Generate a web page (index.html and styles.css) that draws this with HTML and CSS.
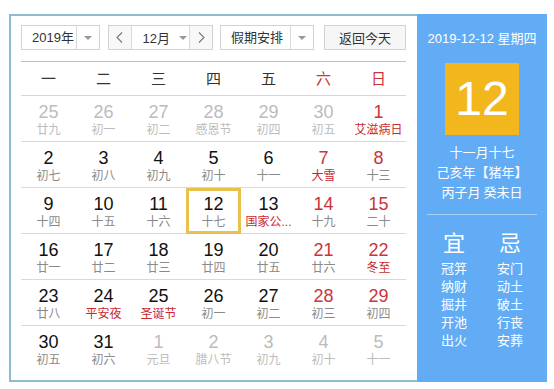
FILE: index.html
```html
<!DOCTYPE html>
<html lang="zh-CN">
<head>
    <meta charset="UTF-8">
    <meta name="viewport" content="width=device-width, initial-scale=1.0">
    <title>万年历</title>
    <link rel="stylesheet" href="styles.css">
</head>
<body>
    <div class="calendar">
        <div class="main">
            <div class="toolbar">
                <div class="select year">
                    <span class="label">2019年</span>
                    <span class="drop"><i class="caret"></i></span>
                </div>
                <div class="month-group">
                    <span class="nav">
                        <svg width="7" height="11" viewBox="0 0 7 11"><polyline points="6,0.5 1,5.5 6,10.5" fill="none" stroke="#777" stroke-width="1.1"/></svg>
                    </span>
                    <span class="month"><span class="label">12月</span><i class="caret"></i></span>
                    <span class="nav">
                        <svg width="7" height="11" viewBox="0 0 7 11"><polyline points="1,0.5 6,5.5 1,10.5" fill="none" stroke="#777" stroke-width="1.1"/></svg>
                    </span>
                </div>
                <div class="select holiday">
                    <span class="label">假期安排</span>
                    <span class="drop"><i class="caret"></i></span>
                </div>
                <button class="today-btn">返回今天</button>
            </div>

            <div class="weekdays">
                <span>一</span><span>二</span><span>三</span><span>四</span><span>五</span>
                <span class="red">六</span><span class="red">日</span>
            </div>

            <div class="days">
                <div class="day other"><b>25</b><em>廿九</em></div>
                <div class="day other"><b>26</b><em>初一</em></div>
                <div class="day other"><b>27</b><em>初二</em></div>
                <div class="day other"><b>28</b><em>感恩节</em></div>
                <div class="day other"><b>29</b><em>初四</em></div>
                <div class="day other"><b>30</b><em>初五</em></div>
                <div class="day weekend fest"><b>1</b><em>艾滋病日</em></div>

                <div class="day"><b>2</b><em>初七</em></div>
                <div class="day"><b>3</b><em>初八</em></div>
                <div class="day"><b>4</b><em>初九</em></div>
                <div class="day"><b>5</b><em>初十</em></div>
                <div class="day"><b>6</b><em>十一</em></div>
                <div class="day weekend fest"><b>7</b><em>大雪</em></div>
                <div class="day weekend"><b>8</b><em>十三</em></div>

                <div class="day"><b>9</b><em>十四</em></div>
                <div class="day"><b>10</b><em>十五</em></div>
                <div class="day"><b>11</b><em>十六</em></div>
                <div class="day today"><b>12</b><em>十七</em></div>
                <div class="day fest"><b>13</b><em>国家公...</em></div>
                <div class="day weekend"><b>14</b><em>十九</em></div>
                <div class="day weekend"><b>15</b><em>二十</em></div>

                <div class="day"><b>16</b><em>廿一</em></div>
                <div class="day"><b>17</b><em>廿二</em></div>
                <div class="day"><b>18</b><em>廿三</em></div>
                <div class="day"><b>19</b><em>廿四</em></div>
                <div class="day"><b>20</b><em>廿五</em></div>
                <div class="day weekend"><b>21</b><em>廿六</em></div>
                <div class="day weekend fest"><b>22</b><em>冬至</em></div>

                <div class="day"><b>23</b><em>廿八</em></div>
                <div class="day fest"><b>24</b><em>平安夜</em></div>
                <div class="day fest"><b>25</b><em>圣诞节</em></div>
                <div class="day"><b>26</b><em>初一</em></div>
                <div class="day"><b>27</b><em>初二</em></div>
                <div class="day weekend"><b>28</b><em>初三</em></div>
                <div class="day weekend"><b>29</b><em>初四</em></div>

                <div class="day last"><b>30</b><em>初五</em></div>
                <div class="day last"><b>31</b><em>初六</em></div>
                <div class="day last other"><b>1</b><em>元旦</em></div>
                <div class="day last other"><b>2</b><em>腊八节</em></div>
                <div class="day last other"><b>3</b><em>初九</em></div>
                <div class="day last other"><b>4</b><em>初十</em></div>
                <div class="day last other"><b>5</b><em>十一</em></div>
            </div>
        </div>

        <div class="side">
            <p class="side-date">2019-12-12 星期四</p>
            <div class="big-day">12</div>
            <p class="lunar">十一月十七<br>己亥年【猪年】<br>丙子月 癸未日</p>
            <div class="divider"></div>
            <div class="almanac">
                <div class="col">
                    <h2>宜</h2>
                    <p>冠笄<br>纳财<br>掘井<br>开池<br>出火</p>
                </div>
                <div class="col">
                    <h2>忌</h2>
                    <p>安门<br>动土<br>破土<br>行丧<br>安葬</p>
                </div>
            </div>
        </div>
    </div>
</body>
</html>
```

FILE: styles.css
```css
body {
    margin: 0;
    background-color: #fff;
    font-family: "Liberation Sans", "Noto Sans CJK SC", sans-serif;
    color: #333;
}

.calendar {
    display: flex;
    width: 538px;
    height: 368px;
    margin: 14px 0 0 9px;
}

.main {
    width: 408px;
    box-sizing: border-box;
    border: 2px solid #8dbccc;
    border-right: 0;
    padding: 9px 11px 0 10px;
}

/* toolbar */
.toolbar {
    display: flex;
    height: 25px;
    font-size: 13px;
}

.select,
.month-group {
    display: flex;
    box-sizing: border-box;
    height: 25px;
    border: 1px solid #d2d2d2;
    background-color: #fff;
}

.select .label {
    flex: 1;
    padding-left: 10px;
    line-height: 23px;
}

.drop {
    display: flex;
    align-items: center;
    justify-content: center;
    width: 22px;
    border-left: 1px solid #d8d8d8;
}

.caret {
    display: inline-block;
    width: 0;
    height: 0;
    border-left: 4px solid transparent;
    border-right: 4px solid transparent;
    border-top: 4px solid #999;
}

.year {
    width: 79px;
}

.month-group {
    width: 105px;
    margin-left: 8px;
}

.nav {
    display: flex;
    align-items: center;
    justify-content: center;
    width: 22px;
    background-color: #f8f8f8;
}

.month {
    display: flex;
    align-items: center;
    width: 59px;
    border-left: 1px solid #d8d8d8;
    border-right: 1px solid #d8d8d8;
}

.month .label {
    padding-left: 11px;
    margin-right: 9px;
}

.holiday {
    width: 94px;
    margin-left: 7px;
}

.today-btn {
    width: 82px;
    height: 25px;
    margin-left: 10px;
    padding: 0;
    border: 1px solid #d2d2d2;
    border-radius: 0;
    background-color: #f6f6f6;
    font-family: inherit;
    font-size: 13px;
    color: #333;
}

/* weekday header */
.weekdays {
    display: grid;
    grid-template-columns: repeat(7, 55px);
    margin-top: 11px;
    border-top: 1px solid #a9c9da;
    border-bottom: 1px solid #d6d6d6;
    height: 33px;
    line-height: 33px;
    text-align: center;
    font-size: 15px;
    color: #333;
}

.weekdays .red {
    color: #c9353b;
}

/* day grid */
.days {
    display: grid;
    grid-template-columns: repeat(7, 55px);
}

.day {
    box-sizing: border-box;
    height: 46px;
    padding-top: 6px;
    border-bottom: 1px solid #d9d9d9;
    text-align: center;
}

.day.last {
    border-bottom: 0;
}

.day b {
    display: block;
    font-weight: normal;
    font-size: 18px;
    line-height: 20px;
    color: #111;
}

.day em {
    display: block;
    font-style: normal;
    font-size: 12px;
    line-height: 16px;
    color: #8a8a8a;
    white-space: nowrap;
}

.day.weekend b {
    color: #c9353b;
}

.day.fest em {
    color: #c9282f;
}

.day.other b,
.day.other em {
    color: #bcbcbc;
}

.day.today {
    border: 3px solid #e9c24e;
    padding-top: 3px;
}

/* right panel */
.side {
    width: 130px;
    background-color: #62acf5;
    color: #fff;
    text-align: center;
    padding-top: 15px;
    box-sizing: border-box;
}

.side p {
    margin: 0;
}

.side-date {
    font-size: 13px;
    line-height: 20px;
}

.big-day {
    width: 74px;
    height: 72px;
    margin: 14px auto 0;
    background-color: #f2b71c;
    font-size: 48px;
    line-height: 72px;
}

.lunar {
    margin-top: 7px !important;
    font-family: "Noto Sans CJK SC", sans-serif;
    font-size: 13px;
    line-height: 20px;
}

.divider {
    height: 1px;
    margin: 12px 10px 0;
    background-color: rgba(255, 255, 255, 0.45);
}

.almanac {
    display: flex;
    justify-content: center;
    margin-top: 13px;
}

.almanac .col {
    width: 56px;
}

.almanac h2 {
    margin: 0;
    font-family: "Noto Sans CJK SC", sans-serif;
    font-weight: normal;
    font-size: 22px;
    line-height: 26px;
}

.almanac p {
    margin-top: 5px;
    font-family: "Noto Sans CJK SC", sans-serif;
    font-size: 13px;
    line-height: 18px;
}
```
